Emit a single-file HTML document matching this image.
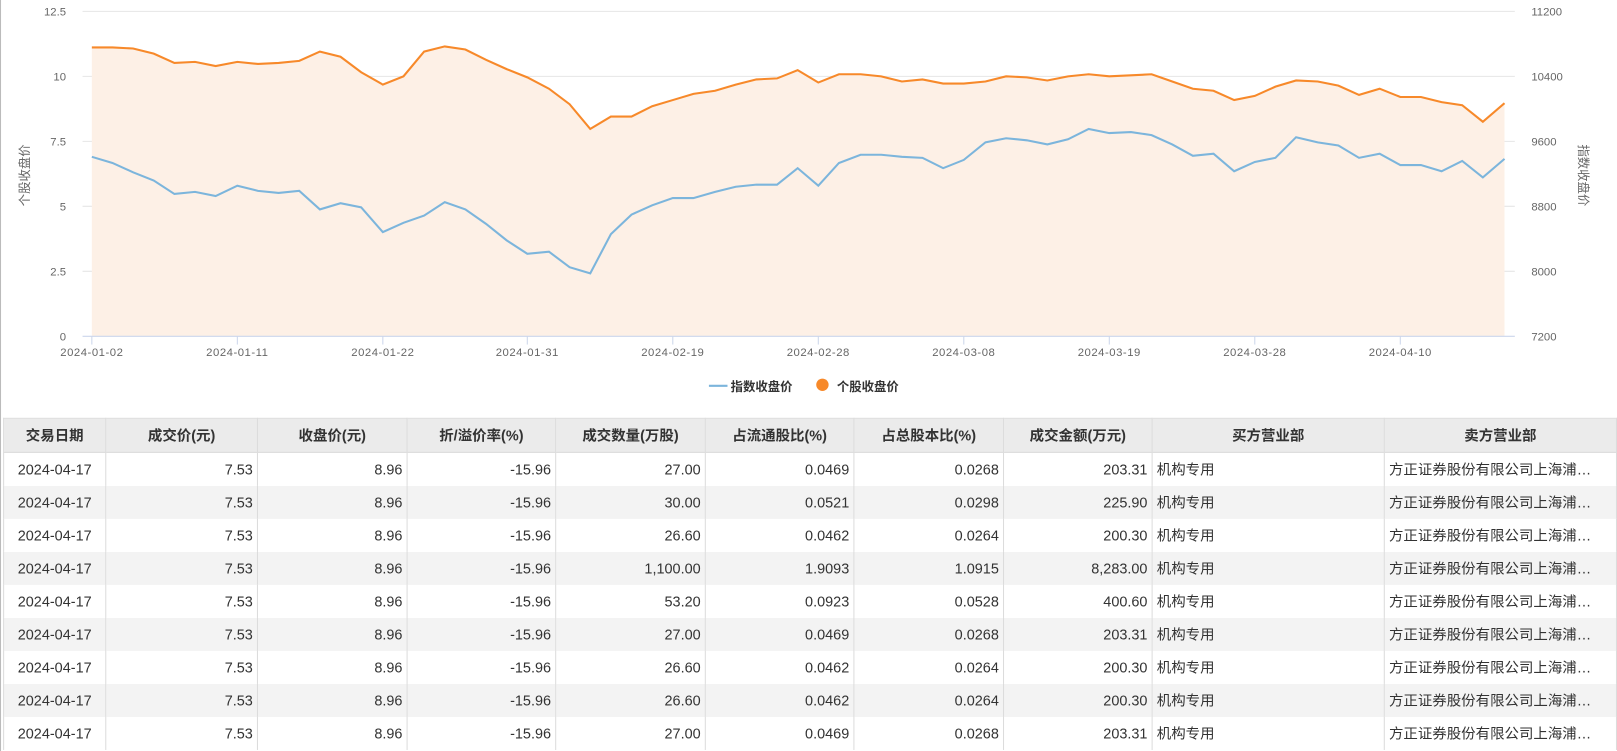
<!DOCTYPE html>
<html><head><meta charset="utf-8"><style>
html,body{margin:0;padding:0;background:#fff;overflow:hidden;width:1617px;height:751px}
#w{position:absolute;left:0;top:0;width:1567px;height:728px;transform:scale(1.0319,1.0316);transform-origin:0 0;font-family:"Liberation Sans","Noto Sans CJK SC",sans-serif;color:#333}
#lb{position:absolute;left:0;top:0;width:1px;height:728px;background:#bbb}
svg text{font-family:"Liberation Sans","Noto Sans CJK SC",sans-serif}
table{position:absolute;left:3px;top:405px;border-collapse:collapse;table-layout:fixed;font-size:14px}
th{background:#ebebeb;height:32px;font-weight:bold;border:1px solid #dcdcdc;padding:0 4px;text-align:center}
td{height:32px;border-left:1px solid #dcdcdc;border-right:1px solid #dcdcdc;padding:0 4px;text-align:right;white-space:nowrap;overflow:hidden}
td.c{text-align:center}td.l{text-align:left}
tr:nth-child(odd) td{background:#f3f3f3}
</style></head><body><div id="w"><div id="lb"></div>
<svg width="1567" height="400" style="position:absolute;left:0;top:0">
<g stroke="#e6e6e6" stroke-width="1">
<line x1="80" y1="11" x2="1468" y2="11"/><line x1="80" y1="74" x2="1468" y2="74"/><line x1="80" y1="137" x2="1468" y2="137"/><line x1="80" y1="200" x2="1468" y2="200"/><line x1="80" y1="263" x2="1468" y2="263"/></g>
<polygon fill="#fdf0e6" points="89,326 89,46 109,46 129,47 149,52 169,61 189,60 209,64 230,60 250,62 270,61 290,59 310,50 330,55 350,70 371,82 391,74 411,50 431,45 451,48 471,58 491,67 511,75 532,86 552,101 572,125 592,113 612,113 632,103 652,97 672,91 693,88 713,82 733,77 753,76 773,68 793,80 813,72 834,72 854,74 874,79 894,77 914,81 934,81 955,79 975,74 995,75 1015,78 1035,74 1055,72 1075,74 1096,73 1116,72 1136,79 1156,86 1176,88 1196,97 1216,93 1236,84 1256,78 1277,79 1297,83 1317,92 1337,86 1357,94 1377,94 1397,99 1417,102 1437,118 1458,100 1458,326"/>
<line x1="80" y1="326" x2="1468" y2="326" stroke="#ccd6eb"/>
<g stroke="#ccd6eb"><line x1="89" y1="326" x2="89" y2="334"/><line x1="230" y1="326" x2="230" y2="334"/><line x1="371" y1="326" x2="371" y2="334"/><line x1="511" y1="326" x2="511" y2="334"/><line x1="652" y1="326" x2="652" y2="334"/><line x1="793" y1="326" x2="793" y2="334"/><line x1="934" y1="326" x2="934" y2="334"/><line x1="1075" y1="326" x2="1075" y2="334"/><line x1="1216" y1="326" x2="1216" y2="334"/><line x1="1357" y1="326" x2="1357" y2="334"/></g>
<polyline fill="none" stroke="#f7892a" stroke-width="2" points="89,46 109,46 129,47 149,52 169,61 189,60 209,64 230,60 250,62 270,61 290,59 310,50 330,55 350,70 371,82 391,74 411,50 431,45 451,48 471,58 491,67 511,75 532,86 552,101 572,125 592,113 612,113 632,103 652,97 672,91 693,88 713,82 733,77 753,76 773,68 793,80 813,72 834,72 854,74 874,79 894,77 914,81 934,81 955,79 975,74 995,75 1015,78 1035,74 1055,72 1075,74 1096,73 1116,72 1136,79 1156,86 1176,88 1196,97 1216,93 1236,84 1256,78 1277,79 1297,83 1317,92 1337,86 1357,94 1377,94 1397,99 1417,102 1437,118 1458,100"/>
<polyline fill="none" stroke="#7cb5dc" stroke-width="2" points="89,152 109,158 129,167 149,175 169,188 189,186 209,190 230,180 250,185 270,187 290,185 310,203 330,197 350,201 371,225 391,216 411,209 431,196 451,203 471,217 491,233 511,246 532,244 552,259 572,265 592,227 612,208 632,199 652,192 672,192 693,186 713,181 733,179 753,179 773,163 793,180 813,158 834,150 854,150 874,152 894,153 914,163 934,155 955,138 975,134 995,136 1015,140 1035,135 1055,125 1075,129 1096,128 1116,131 1136,140 1156,151 1176,149 1196,166 1216,157 1236,153 1256,133 1277,138 1297,141 1317,153 1337,149 1357,160 1377,160 1397,166 1417,156 1437,172 1458,154"/>
<g font-size="11" fill="#666" text-anchor="end"><text x="64" y="15">12.5</text><text x="64" y="78">10</text><text x="64" y="141">7.5</text><text x="64" y="204">5</text><text x="64" y="267">2.5</text><text x="64" y="330">0</text></g>
<g font-size="11" fill="#666"><text x="1484" y="15">11200</text><text x="1484" y="78">10400</text><text x="1484" y="141">9600</text><text x="1484" y="204">8800</text><text x="1484" y="267">8000</text><text x="1484" y="330">7200</text></g>
<g font-size="11" fill="#666" text-anchor="middle" letter-spacing="0.5"><text x="89" y="345">2024-01-02</text><text x="230" y="345">2024-01-11</text><text x="371" y="345">2024-01-22</text><text x="511" y="345">2024-01-31</text><text x="652" y="345">2024-02-19</text><text x="793" y="345">2024-02-28</text><text x="934" y="345">2024-03-08</text><text x="1075" y="345">2024-03-19</text><text x="1216" y="345">2024-03-28</text><text x="1357" y="345">2024-04-10</text></g>
<text font-size="12" fill="#666" transform="translate(28,170) rotate(-90)" text-anchor="middle">个股收盘价</text>
<text font-size="12" fill="#666" transform="translate(1530,170) rotate(90)" text-anchor="middle">指数收盘价</text>
<line x1="687" y1="374" x2="705" y2="374" stroke="#7cb5dc" stroke-width="2"/>
<text x="708" y="379" font-size="12" font-weight="bold" fill="#333">指数收盘价</text>
<circle cx="797" cy="373" r="6" fill="#f7892a"/>
<text x="811" y="379" font-size="12" font-weight="bold" fill="#333">个股收盘价</text>
</svg>
<table>
<colgroup><col style="width:99px"><col style="width:147px"><col style="width:145px"><col style="width:144px"><col style="width:145px"><col style="width:144px"><col style="width:145px"><col style="width:144px"><col style="width:225px"><col style="width:225px"></colgroup>
<tr><th>交易日期</th><th>成交价(元)</th><th>收盘价(元)</th><th>折/溢价率(%)</th><th>成交数量(万股)</th><th>占流通股比(%)</th><th>占总股本比(%)</th><th>成交金额(万元)</th><th>买方营业部</th><th>卖方营业部</th></tr>
<tr><td class="c">2024-04-17</td><td>7.53</td><td>8.96</td><td>-15.96</td><td>27.00</td><td>0.0469</td><td>0.0268</td><td>203.31</td><td class="l">机构专用</td><td class="l">方正证券股份有限公司上海浦…</td></tr>
<tr><td class="c">2024-04-17</td><td>7.53</td><td>8.96</td><td>-15.96</td><td>30.00</td><td>0.0521</td><td>0.0298</td><td>225.90</td><td class="l">机构专用</td><td class="l">方正证券股份有限公司上海浦…</td></tr>
<tr><td class="c">2024-04-17</td><td>7.53</td><td>8.96</td><td>-15.96</td><td>26.60</td><td>0.0462</td><td>0.0264</td><td>200.30</td><td class="l">机构专用</td><td class="l">方正证券股份有限公司上海浦…</td></tr>
<tr><td class="c">2024-04-17</td><td>7.53</td><td>8.96</td><td>-15.96</td><td>1,100.00</td><td>1.9093</td><td>1.0915</td><td>8,283.00</td><td class="l">机构专用</td><td class="l">方正证券股份有限公司上海浦…</td></tr>
<tr><td class="c">2024-04-17</td><td>7.53</td><td>8.96</td><td>-15.96</td><td>53.20</td><td>0.0923</td><td>0.0528</td><td>400.60</td><td class="l">机构专用</td><td class="l">方正证券股份有限公司上海浦…</td></tr>
<tr><td class="c">2024-04-17</td><td>7.53</td><td>8.96</td><td>-15.96</td><td>27.00</td><td>0.0469</td><td>0.0268</td><td>203.31</td><td class="l">机构专用</td><td class="l">方正证券股份有限公司上海浦…</td></tr>
<tr><td class="c">2024-04-17</td><td>7.53</td><td>8.96</td><td>-15.96</td><td>26.60</td><td>0.0462</td><td>0.0264</td><td>200.30</td><td class="l">机构专用</td><td class="l">方正证券股份有限公司上海浦…</td></tr>
<tr><td class="c">2024-04-17</td><td>7.53</td><td>8.96</td><td>-15.96</td><td>26.60</td><td>0.0462</td><td>0.0264</td><td>200.30</td><td class="l">机构专用</td><td class="l">方正证券股份有限公司上海浦…</td></tr>
<tr><td class="c">2024-04-17</td><td>7.53</td><td>8.96</td><td>-15.96</td><td>27.00</td><td>0.0469</td><td>0.0268</td><td>203.31</td><td class="l">机构专用</td><td class="l">方正证券股份有限公司上海浦…</td></tr>
</table>
</div></body></html>
